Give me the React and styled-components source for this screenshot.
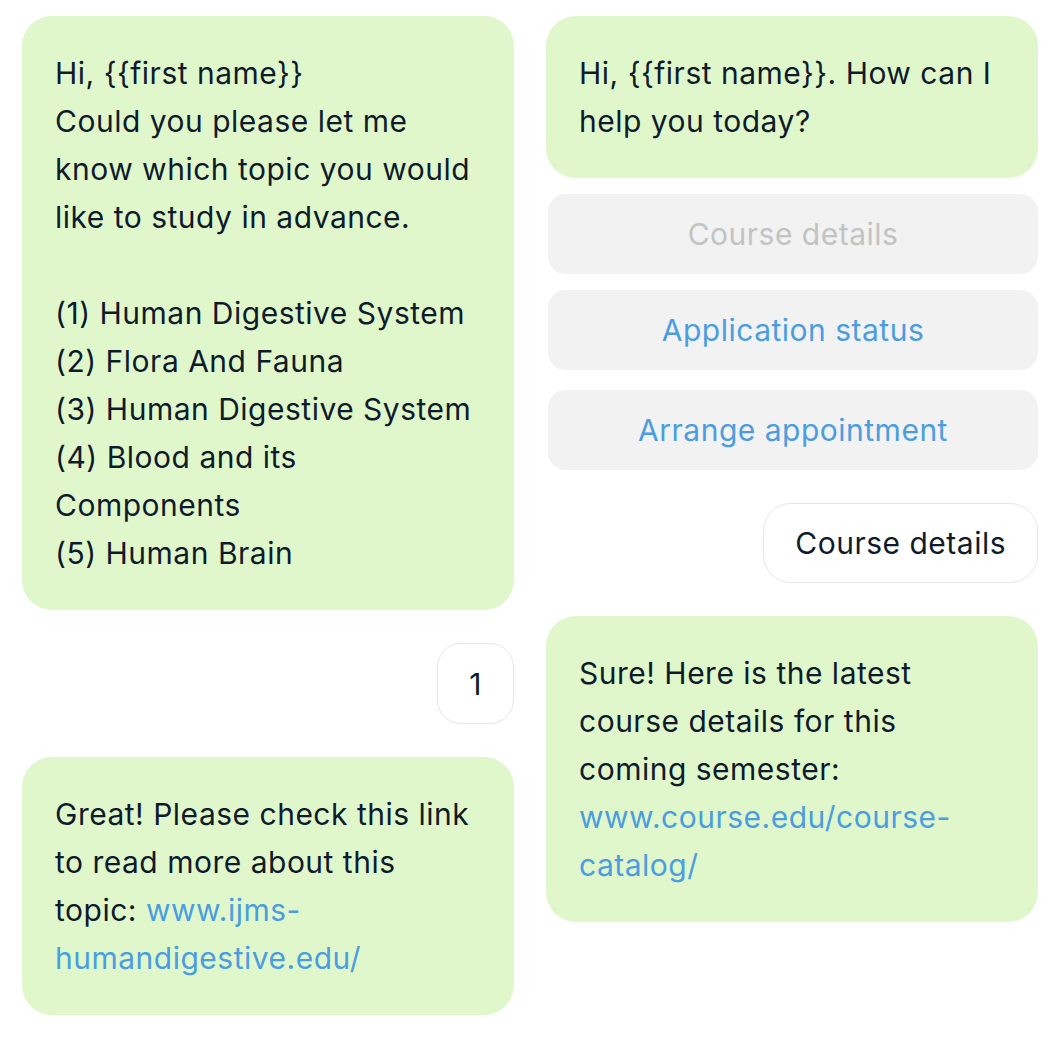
import React from 'react'
import styled, { createGlobalStyle } from 'styled-components'

const GlobalStyle = createGlobalStyle`
	* {
		box-sizing: border-box;
	}
	body {
		margin: 0;
		background: #ffffff;
		font-family: Inter, 'Noto Sans', sans-serif;
		color: #0f1b2b;
	}
`

const Page = styled.div`
	display: flex;
	gap: 32px;
	padding: 16px 22px;
`

const Column = styled.div`
	display: flex;
	flex-direction: column;
	width: 492px;
	flex-shrink: 0;
`

const Bubble = styled.div`
	background: #e0f7cc;
	border-radius: 30px;
	padding: 33px 29px 33px 33px;
	font-size: 30px;
	letter-spacing: 0.5px;
	line-height: 48px;
	margin-top: ${({ $gap }) => $gap || 0}px;
	white-space: pre-line;
`

const Link = styled.a`
	color: #4b9ddf;
	text-decoration: none;
`

const Option = styled.div`
	background: #f2f2f2;
	border-radius: 18px;
	height: 80px;
	margin-left: 2px;
	margin-top: ${({ $gap }) => $gap || 0}px;
	display: flex;
	align-items: center;
	justify-content: center;
	font-size: 30px;
	letter-spacing: 0.5px;
	line-height: 48px;
	color: ${({ $disabled }) => ($disabled ? '#c3c3c3' : '#4b9ddf')};
`

const Reply = styled.div`
	align-self: flex-end;
	height: ${({ $height }) => $height || 80}px;
	padding: 0 ${({ $pad }) => $pad || 28}px;
	margin-top: ${({ $gap }) => $gap || 0}px;
	border: 1.5px solid #e6e6e6;
	border-radius: ${({ $radius }) => $radius || 28}px;
	background: #ffffff;
	display: flex;
	align-items: center;
	font-size: 30px;
	letter-spacing: 0.5px;
	line-height: 48px;
`

const App = () => {
	return (
		<>
			<GlobalStyle />
			<Page>
				<Column>
					<Bubble>
						{`Hi, {{first name}}
Could you please let me know which topic you would like to study in advance.

(1) Human Digestive System
(2) Flora And Fauna
(3) Human Digestive System
(4) Blood and its Components
(5) Human Brain`}
					</Bubble>
					<Reply $gap={33} $height={81} $pad={31} $radius={24}>
						1
					</Reply>
					<Bubble $gap={33}>
						Great! Please check this link to read more about this topic:{' '}
						<Link>www.ijms-humandigestive.edu/</Link>
					</Bubble>
				</Column>
				<Column>
					<Bubble>{'Hi, {{first name}}. How can I help you today?'}</Bubble>
					<Option $gap={16} $disabled>
						Course details
					</Option>
					<Option $gap={16}>Application status</Option>
					<Option $gap={20}>Arrange appointment</Option>
					<Reply $gap={33} $pad={31}>
						Course details
					</Reply>
					<Bubble $gap={33}>
						Sure! Here is the latest course details for this coming semester:{' '}
						<Link>www.course.edu/course-catalog/</Link>
					</Bubble>
				</Column>
			</Page>
		</>
	)
}

export default App
